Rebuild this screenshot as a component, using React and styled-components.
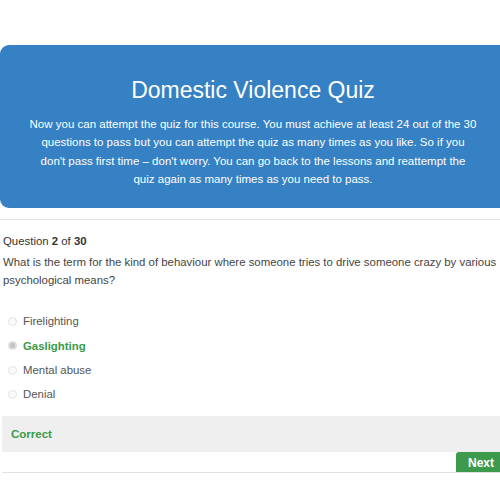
import React from "react";
import styled, { createGlobalStyle } from "styled-components";

const Global = createGlobalStyle`
  html, body { margin: 0; padding: 0; background: #fff; overflow: hidden; }
  body { font-family: "Liberation Sans", Arial, sans-serif; }
`;

const Page = styled.div`
  width: 506px;
  padding-top: 45px;
`;

const Banner = styled.div`
  background: #3581c4;
  border-radius: 9px 0 0 9px;
  padding: 32px 28.75px 20px;
  text-align: center;
  color: #fff;
`;

const Title = styled.h1`
  margin: 0 0 11.6px;
  font-size: 23px;
  line-height: 26.4px;
  font-weight: 400;
`;

const Intro = styled.p`
  margin: 0;
  font-size: 11.5px;
  line-height: 18.33px;
`;

const Quiz = styled.div`
  margin-top: 11px;
  padding-left: 2px;
  border-top: 1px solid #e2e2e2;
`;

const Counter = styled.div`
  margin-top: 12px;
  padding-left: 1px;
  font-size: 11.4px;
  line-height: 18px;
  color: #333;
  b { font-weight: 700; }
`;

const QuestionText = styled.p`
  margin: 3px 0 0;
  padding-left: 1px;
  font-size: 11.4px;
  line-height: 18px;
  color: #444;
`;

const Options = styled.ul`
  list-style: none;
  margin: 20px 0 0;
  padding: 0;
`;

const Option = styled.li`
  display: flex;
  align-items: center;
  gap: 6px;
  height: 24.33px;
  padding-left: 6px;
  font-size: 11.4px;
  color: ${(p) => (p.$correct ? "#3b9b47" : "#555")};
  font-weight: ${(p) => (p.$correct ? 700 : 400)};
`;

const Radio = styled.span`
  width: 7px;
  height: 7px;
  border-radius: 50%;
  border: 1px solid ${(p) => (p.$checked ? "#d4d4d4" : "#e2e2e2")};
  background: ${(p) => (p.$checked ? "radial-gradient(circle, #c4c4c4 0 2.5px, #e6e6e6 3px)" : "#fafafa")};
`;

const Feedback = styled.div`
  margin-top: 9px;
  height: 36px;
  display: flex;
  align-items: center;
  padding-left: 9px;
  background: #efefef;
  color: #3b9b47;
  font-size: 11.5px;
  font-weight: 700;
`;

const Actions = styled.div`
  display: flex;
  justify-content: flex-end;
  border-bottom: 1px solid #e2e2e2;
`;

const NextButton = styled.button`
  width: 50px;
  height: 20px;
  border: none;
  border-radius: 3px 3px 0 0;
  background: #3d9a4c;
  color: #fff;
  font-family: "Liberation Sans", Arial, sans-serif;
  font-size: 12px;
  font-weight: 700;
  padding: 2px 0 0;
  cursor: pointer;
`;

const options = [
  { label: "Firelighting" },
  { label: "Gaslighting", correct: true },
  { label: "Mental abuse" },
  { label: "Denial" },
];

export default function App() {
  return (
    <>
      <Global />
      <Page>
        <Banner>
          <Title>Domestic Violence Quiz</Title>
          <Intro>
            Now you can attempt the quiz for this course. You must achieve at least 24 out of the 30 questions to pass but you can attempt the quiz as many times as you like. So if you don't pass first time – don't worry. You can go back to the lessons and reattempt the quiz again as many times as you need to pass.
          </Intro>
        </Banner>
        <Quiz>
          <Counter>
            Question <b>2</b> of <b>30</b>
          </Counter>
          <QuestionText>
            What is the term for the kind of behaviour where someone tries to drive someone crazy by various psychological means?
          </QuestionText>
          <Options>
            {options.map((o) => (
              <Option key={o.label} $correct={o.correct}>
                <Radio $checked={o.correct} />
                {o.label}
              </Option>
            ))}
          </Options>
          <Feedback>Correct</Feedback>
          <Actions>
            <NextButton>Next</NextButton>
          </Actions>
        </Quiz>
      </Page>
    </>
  );
}
